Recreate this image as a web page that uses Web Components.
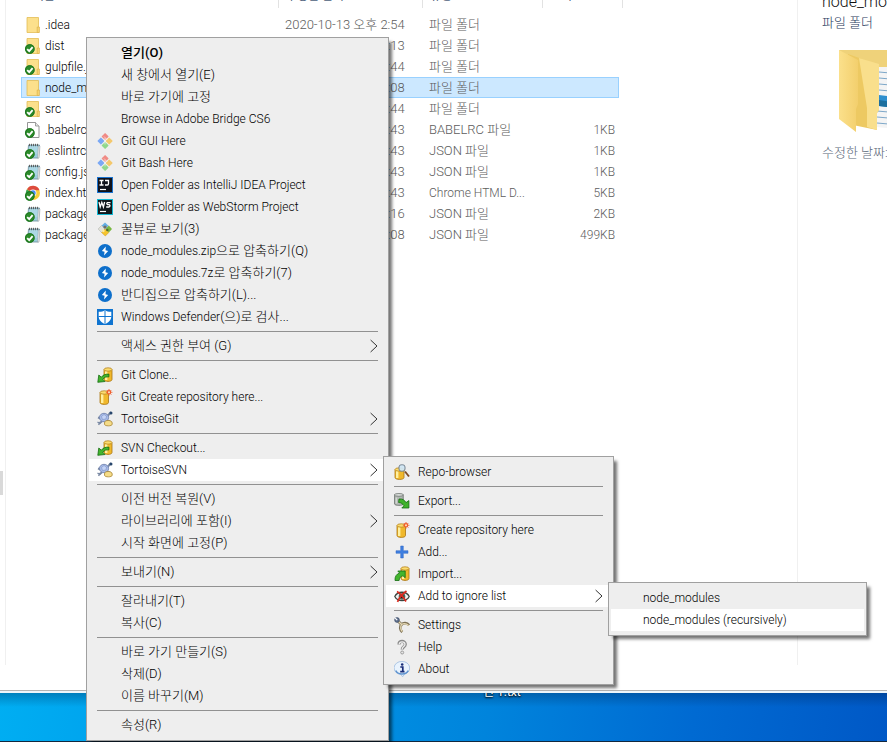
<!DOCTYPE html>
<html lang="ko">
<head>
<meta charset="utf-8">
<title>node_modules</title>
<style>
  html, body { height: 100%; }
  body { margin: 0; overflow: hidden; }
</style>
</head>
<body>
<desktop-scene>
  <explorer-window>
    <file-list></file-list>
    <details-pane slot="details"></details-pane>
  </explorer-window>
  <context-menu slot="menu" class="root">
    <menu-item bold>열기(O)</menu-item>
    <menu-item>새 창에서 열기(E)</menu-item>
    <menu-item>바로 가기에 고정</menu-item>
    <menu-item latin>Browse in Adobe Bridge CS6</menu-item>
    <menu-item latin icon="git">Git GUI Here</menu-item>
    <menu-item latin icon="git">Git Bash Here</menu-item>
    <menu-item latin icon="idea">Open Folder as IntelliJ IDEA Project</menu-item>
    <menu-item latin icon="webstorm">Open Folder as WebStorm Project</menu-item>
    <menu-item icon="honeyview">꿀뷰로 보기(3)</menu-item>
    <menu-item icon="bandizip"><span>node_modules.zip</span>으로 압축하기(Q)</menu-item>
    <menu-item icon="bandizip"><span>node_modules.7z</span>로 압축하기(7)</menu-item>
    <menu-item icon="bandizip">반디집으로 압축하기(L)...</menu-item>
    <menu-item icon="defender"><span>Windows Defender</span>(으)로 검사...</menu-item>
    <menu-line></menu-line>
    <menu-item more>액세스 권한 부여 (G)</menu-item>
    <menu-line></menu-line>
    <menu-item latin icon="checkout">Git Clone...</menu-item>
    <menu-item latin icon="create">Git Create repository here...</menu-item>
    <menu-item latin icon="tortoise" more>TortoiseGit</menu-item>
    <menu-line></menu-line>
    <menu-item latin icon="checkout">SVN Checkout...</menu-item>
    <menu-item latin icon="tortoise" more active>TortoiseSVN
      <context-menu slot="submenu" class="svn">
        <menu-item latin icon="repo">Repo-browser</menu-item>
        <menu-line></menu-line>
        <menu-item latin icon="export">Export...</menu-item>
        <menu-line></menu-line>
        <menu-item latin icon="create">Create repository here</menu-item>
        <menu-item latin icon="add">Add...</menu-item>
        <menu-item latin icon="import">Import...</menu-item>
        <menu-item latin icon="ignore" more active>Add to ignore list
          <context-menu slot="submenu" class="ignore">
            <menu-item latin>node_modules</menu-item>
            <menu-item latin active>node_modules (recursively)</menu-item>
          </context-menu>
        </menu-item>
        <menu-line></menu-line>
        <menu-item latin icon="settings">Settings</menu-item>
        <menu-item latin icon="help">Help</menu-item>
        <menu-item latin icon="about">About</menu-item>
      </context-menu>
    </menu-item>
    <menu-line></menu-line>
    <menu-item>이전 버전 복원(V)</menu-item>
    <menu-item more>라이브러리에 포함(I)</menu-item>
    <menu-item>시작 화면에 고정(P)</menu-item>
    <menu-line></menu-line>
    <menu-item more>보내기(N)</menu-item>
    <menu-line></menu-line>
    <menu-item>잘라내기(T)</menu-item>
    <menu-item>복사(C)</menu-item>
    <menu-line></menu-line>
    <menu-item>바로 가기 만들기(S)</menu-item>
    <menu-item>삭제(D)</menu-item>
    <menu-item>이름 바꾸기(M)</menu-item>
    <menu-line></menu-line>
    <menu-item>속성(R)</menu-item>
  </context-menu>
</desktop-scene>

<script>
const svg = (body, box = '0 0 16 16') => `<svg viewBox="${box}" width="16" height="16" aria-hidden="true">${body}</svg>`;

const cylinder = (x, y, w, h) => `
  <path d="M${x} ${y + 2}v${h - 4}c0 2.6 ${w} 2.6 ${w} 0v-${h - 4}z" fill="#f0b82c" stroke="#a87412" stroke-width=".8"/>
  <path d="M${x + 2.2} ${y + 3.5}v${h - 5}" stroke="#fff0a0" stroke-width="2.4"/>
  <ellipse cx="${x + w / 2}" cy="${y + 2}" rx="${w / 2}" ry="1.7" fill="#fbdc70" stroke="#b88420" stroke-width=".8"/>`;

const tick = `<circle cx="4.8" cy="11" r="4.800" fill="#2c8a2a"/><circle cx="4.8" cy="11" r="4.400" fill="none" stroke="#17701a" stroke-width=".8"/>
  <path d="M2.2 11.200l2 2 3.400-4" fill="none" stroke="#fff" stroke-width="1.800"/>`;

const folder = `<path d="M2 .5h11.500v15H2z" fill="#fbe08a" stroke="#e3bc55" stroke-width=".8"/>
  <path d="M3 1.500h8v13H3z" fill="#fce08c"/><path d="M12.2 10h2.2v5.500h-2.200z" fill="#f8d675" stroke="#dcb24a" stroke-width=".7"/>`;

const notepad = `<path d="M3.500 2h11l-1 13H2.500z" fill="#9ccfdf" stroke="#6d8e9a" stroke-width=".8"/>
  <path d="M4 4h9.500M4 6h9.500M4 8h9M4 10h9" stroke="#c4e4ee" stroke-width=".8"/>
  <path d="M4.500 .8v2.400M6.500 .8v2.400M8.500 .8v2.400M10.500 .8v2.400M12.500 .8v2.400" stroke="#555" stroke-width=".9"/>
  <path d="M13.300 3h1.700l-1 12h-1.500z" fill="#e8e8e8" stroke="#7f8c90" stroke-width=".4"/>`;

const ICONS = {
  folder: svg(folder),
  folderTick: svg(folder + tick),
  page: svg(`<path d="M2.500 .5h8l3.500 3.500v11.500h-11.500z" fill="#fff" stroke="#8a8a8a" stroke-width=".9"/><path d="M10.500 .5v3.500h3.500" fill="#e8e8e8" stroke="#8a8a8a" stroke-width=".8"/>` + tick),
  note: svg(notepad + tick),
  chrome: svg(`<circle cx="8" cy="8" r="7" fill="#f7cf3b"/><path d="M8 8L2 4.200A7 7 0 0 1 14.500 5.200H8z" fill="#dd4b3e"/><path d="M8 8L1.800 4.500A7 7 0 0 0 7 15z" fill="#3aa757"/>
    <circle cx="8" cy="8" r="3.400" fill="#fff"/><circle cx="8" cy="8" r="2.700" fill="#4a8af4"/>` + tick),
  git: svg(`<rect x="5.500" y=".9" width="5.200" height="5.200" rx=".8" transform="rotate(45 8.100 3.500)" fill="#f08a84"/>
    <rect x="1.300" y="5.400" width="5.200" height="5.200" rx=".8" transform="rotate(45 3.900 8)" fill="#7aa8f4"/>
    <rect x="9.600" y="5.400" width="5.200" height="5.200" rx=".8" transform="rotate(45 12.200 8)" fill="#f4c86c"/>
    <rect x="5.500" y="9.900" width="5.200" height="5.200" rx=".8" transform="rotate(45 8.100 12.500)" fill="#8fd88c"/>
    <path d="M7 3.500l3 3M8 5v6.500" stroke="#fff" stroke-width=".8" opacity=".7"/>`),
  idea: svg(`<rect x=".5" y=".5" width="15" height="15" fill="#10131c" stroke="#1b73d0"/><path d="M2.500 3.500h4M4.500 3.500v4.500M2.500 8h4M8 3.500h3.500v3.300q0 1.200-1.200 1.200H8" fill="none" stroke="#fff" stroke-width="1.300"/><path d="M3 12.500h6" stroke="#fff" stroke-width="1.200"/>`),
  webstorm: svg(`<rect x=".5" y=".5" width="15" height="15" fill="#10181c" stroke="#12b8d4"/><path d="M2 3l1.200 5 1.600-4.500 1.600 4.500L7.600 3M13.500 3.600H10.500q-1.500 1 0 2h1.500q2 1.200 0 2.400H9.200" fill="none" stroke="#fff" stroke-width="1.300"/><path d="M3 12.500h6" stroke="#fff" stroke-width="1.200"/>`),
  honeyview: svg(`<path d="M8 1.500L11.500 4.800 8 8 4.500 4.800z" fill="#64aee4"/><path d="M4.500 4.500L8 8 4.500 11.500 1.200 8z" fill="#e2e2da" stroke="#b0b4ac" stroke-width=".6"/>
    <path d="M11.800 4.500L15 8l-3.200 3.500L8.500 8z" fill="#78b840"/><path d="M8 8l3.800 3.500L8.300 15 4.600 11.500z" fill="#f6c52c" stroke="#c9951c" stroke-width=".5"/><circle cx="8" cy="6" r="1.600" fill="#6f6f68"/><circle cx="6.300" cy="9.800" r="1.400" fill="#fbeaa0"/><circle cx="10.300" cy="9" r="1.200" fill="#586a2a"/>`),
  bandizip: svg(`<circle cx="8" cy="8" r="7" fill="#0d6fcb"/><path d="M8.800 3.600L4.900 8.100l2.700.7-.6 3.700 4.200-4.600-2.700-.7z" fill="#fff"/>`),
  defender: svg(`<rect width="16" height="16" fill="#0f74d0"/><path d="M8 1.200c2 1.300 4 1.600 6.300 1.500v4.800c0 3.500-2.800 6.200-6.300 7.500-3.500-1.300-6.300-4-6.300-7.500V2.700c2.300.1 4.300-.2 6.300-1.500z" fill="#fff"/><path d="M8 1.500v13.300M1.500 7.500h13" stroke="#0f74d0" stroke-width="1"/>`),
  checkout: svg(cylinder(7, 0.5, 8, 14) + `<path d="M12 7.200C8.500 6.800 6 8 4.300 10.200L1.800 8 .8 15.300l7.200-.8-2.200-2.200c1.500-2 3.500-2.800 6-2.300z" fill="#43b52d" stroke="#156c12" stroke-width=".8"/>`),
  create: svg(cylinder(3, 1.5, 8.5, 14) + `<circle cx="12" cy="3.300" r="1.700" fill="#fbd9b0" stroke="#f05a28" stroke-width="1.100"/><path d="M12 0v1.200M12 5.400v1.200M8.900 3.300h1M14.200 3.300h1.200M9.800 1.100l.8.800M13.500 4.800l.8.800M14.300 1.100l-.8.800" stroke="#f05a28" stroke-width=".9"/>`),
  tortoise: svg(`<path d="M1 6.500l3 1M2 12.800l3-2.500M10.500 5l3.500-4M10 9.500l3 1" stroke="#7b8aa4" stroke-width="2"/><ellipse cx="7" cy="6.500" rx="4.600" ry="4.200" fill="#a9bce8" stroke="#6b7ca8" stroke-width=".8"/>
    <path d="M4.500 5.500l2.500-2 2.500 1.500-.5 3-3.500.5z" fill="#c5d4f6" stroke="#7b8fc4" stroke-width=".6"/><circle cx="14" cy="2" r="1.500" fill="#27466c"/><path d="M.5 11.200l3 1.300M3.500 11l-2 2.800" stroke="#7b8aa4" stroke-width="1.300"/>
    <path d="M7.500 12c0-1.800 1.700-2.500 3.700-2.500s4 .8 4 2.500v1.200c0 2.200-7.700 2.200-7.700 0z" fill="#f5dc88" stroke="#a98532" stroke-width=".8"/>`),
  repo: svg(cylinder(1, 3.5, 9, 12) + `<path d="M11 7.500l4 5" stroke="#7d4b25" stroke-width="1.900"/><rect x="5" y=".8" width="6" height="6.400" rx="2.200" fill="#cfe6f5" fill-opacity=".92" stroke="#75838f"/>`),
  export: svg(`<path d="M.6 1.500v9.500c0 1.800 8.600 1.800 8.600 0V1.500z" fill="#b3b8b4" stroke="#6e7471" stroke-width=".9"/><ellipse cx="4.900" cy="1.900" rx="4.300" ry="1.400" fill="#d9ddda" stroke="#6e7471" stroke-width=".8"/><path d="M2.200 4.500v6" stroke="#e2e6e2"/>
    <path d="M5 6c3.400-.4 5.600 1 7 3.600l2.900-2V15H7.800l2.200-2.200C8.700 10.800 7.200 9.600 4.600 9.500z" fill="#3fb32b" stroke="#156c12" stroke-width=".8"/>`),
  add: svg(`<path d="M6.700 2h2.600v4.700H14v2.600H9.300V14H6.700V9.300H2V6.700h4.700z" fill="#3f7fe0" stroke="#2c65c4" stroke-width=".5"/>`),
  import: svg(cylinder(7, .5, 8, 14) + `<path d="M1 14.500c-.3-4 1.500-6.500 4.600-7.500L3.800 5h7.400v6.800L9 9.800c-2.400.6-3.700 2-3.900 4.700z" fill="#43b52d" stroke="#156c12" stroke-width=".8"/>`),
  ignore: svg(`<path d="M.8 8.500C3.500 2.800 12.500 2.800 15.200 8.500 12.500 14 3.500 14 .8 8.500z" fill="#f2f2f2" stroke="#3c4640" stroke-width="1.300"/><circle cx="8" cy="8.500" r="3.300" fill="#46665a"/><circle cx="8" cy="8.500" r="1.500" fill="#111"/>
    <path d="M3 3.500c3 1.800 6.600 6 9 10M12.500 3C9 5.500 5.500 9 3.500 13.800" stroke="#d92b20" stroke-width="1.700" fill="none"/>`),
  settings: svg(`<path d="M3.500 3.500l4 4c2-2 5.500-2 7.500.8M7.500 7.500c-1.800 2.200-1.500 5.500.8 7.500" fill="none" stroke="#7f7357" stroke-width="2.800"/><path d="M4.500 4.500l3 3c2.500-1.500 5-1 7 1M7.500 7.500c-1.300 2.500-1 5 .8 7" fill="none" stroke="#e6d9b4" stroke-width="1.300"/>
    <circle cx="3" cy="3" r="2.400" fill="#5f708c" stroke="#394a66" stroke-width=".6"/><path d="M1.200 1.200l2 2" stroke="#fff" stroke-width="1.200"/>`),
  help: svg(`<path d="M5 5.400c0-4 6.300-3.800 6.300-.2C11.300 7.800 8.200 7.700 8.200 10.500" fill="none" stroke="#8b8b8b" stroke-width="3.200"/><path d="M5.200 5.200c.2-3.200 5.800-3 5.800 0 0 2.300-2.800 2.400-2.800 5" fill="none" stroke="#ececec" stroke-width="1.300"/><circle cx="8.200" cy="13.500" r="1.500" fill="#e6e6e6" stroke="#8b8b8b" stroke-width=".8"/>`),
  about: svg(`<path d="M8 .5a7.400 6.500 0 0 1 2.500 12.700L8.600 15.800 7 13.500A7.400 6.500 0 0 1 8 .5z" fill="#e9f3fd" stroke="#9dbbe0" stroke-width=".8"/><path d="M1.800 9.500c1.700 4.300 10 4.800 12.500.2" fill="none" stroke="#5f93cf" stroke-width="1.400"/><circle cx="8.200" cy="3.500" r="1.300" fill="#182c78"/><path d="M6.300 6h2.500v4.500M6.200 10.700h4.300" fill="none" stroke="#182c78" stroke-width="1.700"/>`),
};

const FONT = '"Roboto", "Noto Sans CJK KR", sans-serif';

function define(name, build) {
  customElements.define(name, class extends HTMLElement {
    constructor() {
      super();
      this.attachShadow({ mode: 'open' });
    }
    connectedCallback() {
      if (!this.shadowRoot.childElementCount) this.shadowRoot.innerHTML = build(this);
    }
  });
}

define('desktop-scene', () => `
  <style>
    :host { display: flex; flex-direction: column; height: 100vh; position: relative; overflow: hidden; font: 300 13px/22px ${FONT}; color: #000; }
    ::slotted(explorer-window) { flex: 1; min-height: 0; }
    .desktop { height: 49px; box-sizing: border-box; border-bottom: 1px solid #12283e; overflow: hidden; display: flex;
      background: linear-gradient(rgba(0,30,70,.3), rgba(0,30,70,0) 14px), linear-gradient(100deg, #00aef2, #00a4ee 12%, #0084dc 55%, #006ad2 78%, #0058c6); }
    .label { margin: -9px 0 0 483px; font-size: 12px; line-height: 16px; font-weight: 400; color: #fff; text-shadow: 0 1px 2px #000, 0 0 2px #000; }
    ::slotted(.root) { position: absolute; left: 86px; top: 37px; width: 303px; }
  </style>
  <slot></slot>
  <div class="desktop"><div class="label">핀 1.txt</div></div>
  <slot name="menu"></slot>`);

define('explorer-window', () => `
  <style>
    :host { display: flex; flex-direction: column; background: #fff; border-bottom: 2px solid #eef6fb; box-sizing: border-box; }
    .panes { flex: 1; min-height: 0; display: flex; overflow: hidden; }
    .tree { width: 5px; border-right: 1px solid #f0f0f0; display: flex; align-items: flex-start; }
    .thumb { width: 3px; height: 24px; margin-top: 471px; background: #d9d9d9; }
    .files { flex: 1; min-width: 0; padding: 0 174px 0 15px; }
    .details { width: 89px; border-left: 1px solid #f0f0f0; overflow: hidden; }
    .status { height: 25px; border-bottom: 1px solid #b4b4b4; }
  </style>
  <div class="panes">
    <div class="tree"><div class="thumb"></div></div>
    <div class="files"><slot></slot></div>
    <div class="details"><slot name="details"></slot></div>
  </div>
  <div class="status"></div>`);

const FILES = [
  ['folder', '.idea', '2:54', '파일 폴더', ''],
  ['folderTick', 'dist', '2:13', '파일 폴더', ''],
  ['folderTick', 'gulpfile.js', '2:44', '파일 폴더', ''],
  ['folder', 'node_modules', '3:08', '파일 폴더', ''],
  ['folderTick', 'src', '2:44', '파일 폴더', ''],
  ['page', '.babelrc', '2:43', 'BABELRC 파일', '1KB'],
  ['note', '.eslintrc.json', '2:43', 'JSON 파일', '1KB'],
  ['note', 'config.json', '2:43', 'JSON 파일', '1KB'],
  ['chrome', 'index.html', '2:43', 'Chrome HTML D...', '5KB'],
  ['note', 'package.json', '3:16', 'JSON 파일', '2KB'],
  ['note', 'package-lock.json', '3:08', 'JSON 파일', '499KB'],
];

define('file-list', () => `
  <style>
    :host { display: block; margin-top: -17px; }
    table { width: 100%; table-layout: fixed; border-collapse: separate; border-spacing: 0; color: #5c5c5c; line-height: 20px; }
    th { height: 25px; box-sizing: border-box; padding: 0 0 0 7px; border-right: 1px solid #e2e2e2; text-align: left; font-weight: 400; font-size: 12px; color: #4c607a; }
    th:first-child { padding-left: 12px; }
    th.date { width: 144px; } th.type { width: 120px; } th.size { width: 80px; }
    tbody::before { content: ""; display: block; height: 6px; }
    td { height: 21px; padding: 0 0 0 6px; white-space: nowrap; overflow: hidden; }
    td:first-child { padding-left: 4px; color: #000; font-size: 12px; }
    td.latin { font-size: 12px; }
    td:last-child { text-align: right; padding: 0 4px 0 0; border-right: 4px solid transparent; background-clip: padding-box; font-size: 12px; }
    .name { display: flex; align-items: center; gap: 4px; }
    svg { display: block; flex: none; }
    .selected td { background-color: #cce8ff; box-shadow: inset 0 1px #99d1ff, inset 0 -1px #99d1ff; }
    .selected td:first-child { box-shadow: inset 1px 1px #99d1ff, inset 0 -1px #99d1ff; }
    .selected td:last-child { box-shadow: inset -1px 1px #99d1ff, inset 0 -1px #99d1ff; }
  </style>
  <table>
    <thead><tr><th>이름</th><th class="date">수정한 날짜</th><th class="type">유형</th><th class="size">크기</th></tr></thead>
    <tbody>${FILES.map(([icon, name, time, type, size]) => `
      <tr${name === 'node_modules' ? ' class="selected"' : ''}>
        <td><div class="name">${ICONS[icon]}${name}</div></td><td>2020-10-13 오후 ${time}</td>
        <td${type.startsWith('Chrome') ? ' class="latin"' : ''}>${type}</td><td>${size}</td>
      </tr>`).join('')}
    </tbody>
  </table>`);

define('details-pane', () => `
  <style>
    :host { display: block; padding-left: 24px; white-space: nowrap; color: #1e395b; }
    h2 { margin: -9px 0 0; font-size: 16px; line-height: 22px; font-weight: inherit; color: #111; }
    p { margin: 0; line-height: 20px; }
    svg { display: block; margin: 17px 0 9px 17px; }
    .meta { color: #5a6779; }
  </style>
  <h2>node_modules</h2>
  <p>파일 폴더</p>
  <svg width="84" height="84" viewBox="0 0 84 84" aria-hidden="true">
    <defs>
      <linearGradient id="a" x2="1"><stop stop-color="#fbe08b"/><stop offset="1" stop-color="#f3cf6d"/></linearGradient>
      <linearGradient id="b" x2="1"><stop stop-color="#e6be55"/><stop offset="1" stop-color="#f9dd85"/></linearGradient>
    </defs>
    <path d="M0 0h84v60H8z" fill="#efd27a"/>
    <path d="M37 17h47v64l-47-4z" fill="#f4f4f4"/>
    <path d="M40 22l44 4M40 28l44 4M40 34l44 4M40 40l44 4M38 61l46 4M38 67l46 4M38 73l46 4" stroke="#7da7c8"/>
    <path d="M40 45l44 5v12l-44-6z" fill="#2f8fce"/><path d="M40 50l12 2 10-3 22 7v6l-44-6z" fill="#1d6f9e"/>
    <path d="M9 4l31 11v45l-2 3v17L9 74z" fill="#edc962"/>
    <path d="M20 8l20 6v46l-2 3v17l-10-3V58z" fill="#f9df8c"/>
    <path d="M0 0l19 10v44l-2 5v23L0 69z" fill="url(#a)"/>
  </svg>
  <p class="meta">수정한 날짜:</p>`);

define('context-menu', () => `
  <style>
    :host { display: block; box-sizing: border-box; padding: 4px 2px; background: #eee; border: 1px solid #a0a0a0; box-shadow: 4px 4px 3px -1px rgba(0,0,0,.55); z-index: 1; }
    :host(.svn) { width: 231px; }
    :host(.ignore) { width: 259px; }
  </style>
  <div role="menu"><slot></slot></div>`);

define('menu-line', () => `
  <style>
    :host { display: block; padding: 3px 8px; }
    hr { margin: 0; border: 0; height: 1px; background: #919191; }
  </style>
  <hr>`);

define('menu-item', (el) => `
  <style>
    :host { display: block; position: relative; }
    button { display: flex; align-items: center; width: 100%; height: 22px; padding: 0 8px; border: 0; background: none; color: inherit; font: inherit; text-align: left; white-space: nowrap; }
    :host([active]) button { background: #fff; }
    :host([latin]) button { font-size: 12px; }
    :host([bold]) button { font-weight: 500; }
    .icon { width: 16px; height: 16px; margin-right: 8px; flex: none; }
    .text { flex: 1; }
    ::slotted(span) { font-size: 12px; }
    svg { display: block; }
    ::slotted(context-menu) { position: absolute; left: calc(100% - 3px); top: -3px; }
  </style>
  <button type="button" role="menuitem">
    <span class="icon">${ICONS[el.getAttribute('icon')] || ''}</span>
    <span class="text"><slot></slot></span>
    ${el.hasAttribute('more') ? '<svg width="8" height="14" viewBox="0 0 8 14" aria-hidden="true"><path d="M.6 1l6.400 6-6.400 6" fill="none" stroke="#333"/></svg>' : ''}
  </button>
  <slot name="submenu"></slot>`);
</script>
</body>
</html>
